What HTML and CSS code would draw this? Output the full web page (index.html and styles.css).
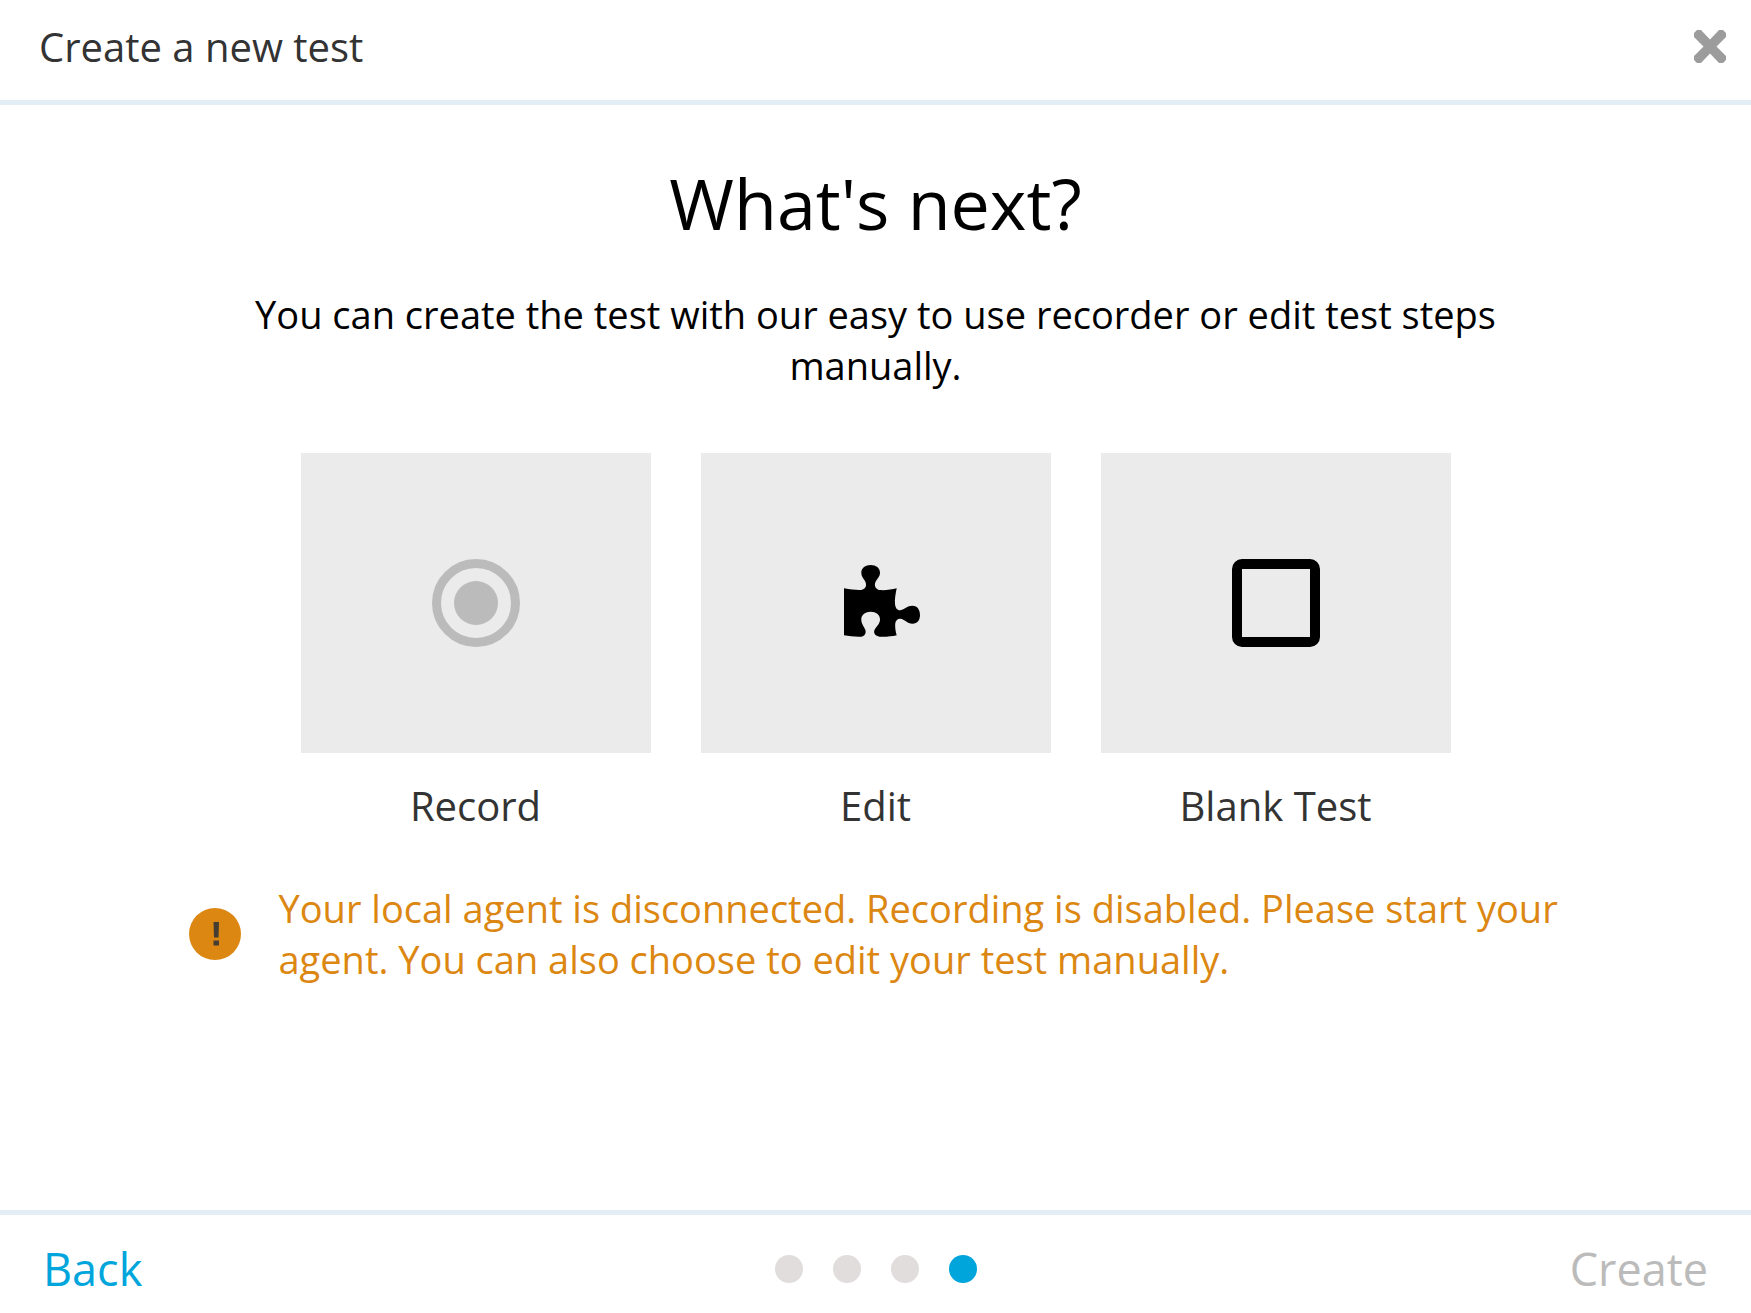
FILE: index.html
```html
<!DOCTYPE html>
<html lang="en">
<head>
<meta charset="utf-8">
<title>Create a new test</title>
<link rel="stylesheet" href="styles.css">
</head>
<body>
<header class="header">
  <h1 class="header-title">Create a new test</h1>
  <button class="close" type="button" aria-label="Close">
    <svg viewBox="0 0 32 33" width="32" height="33"><path d="M3 0H7L16 9.5L25 0H29L32 3V7L22.5 16.5L32 26V30L29 33H25L16 23.5L7 33H3L0 30V26L9.5 16.5L0 7V3Z" fill="#9c9c9c"/></svg>
  </button>
</header>
<main class="content">
  <h2 class="heading">What's next?</h2>
  <p class="intro">You can create the test with our easy to use recorder or edit test steps manually.</p>
  <div class="options">
    <button class="option" type="button" disabled>
      <span class="tile"><svg viewBox="0 0 88 88" width="88" height="88"><circle cx="44" cy="44" r="39.5" fill="none" stroke="#bbb" stroke-width="9"/><circle cx="44" cy="44" r="22" fill="#bbb"/></svg></span>
      <span class="label">Record</span>
    </button>
    <button class="option" type="button">
      <span class="tile"><svg viewBox="0 0 88 88" width="88" height="88"><path d="M12 29.3C18.500 30.500 24.500 31.200 28.500 31C33.500 30.500 35 27 33.500 23C32 19.500 29.300 18 29.300 13.500C29.300 9 33.500 6 38.700 6C44 6 48 9 48 13.500C48 18 45 19.500 43.300 23.500C42 27 44 30.500 47.500 31C53.500 31.500 59.500 30.500 64.700 29.300C63.500 35 62.500 41 63 45C63.500 49.500 65.500 51.500 68.500 51.200C72.500 50.500 75 46.700 80.500 46.700C85.500 46.700 88 51 88 56C88 61 85.500 64.700 80.500 64.700C75 64.700 72.500 60 68.500 59.700C65.500 59.500 63.500 61.500 63.200 65C63 69 63.700 73 64.700 76.300C59.500 77.500 53.500 78 47.500 77.700C43.500 77 41.500 74.500 42.300 71.500C43.500 68 48 65.500 48 60.500C48 55.500 44 52.700 38.700 52.700C33.500 52.700 29.300 55.500 29.300 60.500C29.300 65 32 67.500 33.200 70.500C34.500 74 33 76.800 29.500 77.700C23.500 78 17.500 77.300 12 76.300Z"/></svg></span>
      <span class="label">Edit</span>
    </button>
    <button class="option" type="button">
      <span class="tile"><svg viewBox="0 0 88 88" width="88" height="88"><path fill-rule="evenodd" d="M10 0H78A10 10 0 0 1 88 10V78A10 10 0 0 1 78 88H10A10 10 0 0 1 0 78V10A10 10 0 0 1 10 0ZM10 10V78H78V10Z"/></svg></span>
      <span class="label">Blank Test</span>
    </button>
  </div>
  <div class="warning" role="alert">
    <svg class="warning-icon" viewBox="0 0 52 52" width="52" height="52"><circle cx="26" cy="26" r="26" fill="#db8712"/><path d="M24.500 14h5.500l-.5 15.500h-4.500zM24.500 32.500h5.500v5h-5.500z" fill="#453c32"/></svg>
    <p class="warning-text">Your local agent is disconnected. Recording is disabled. Please start your agent. You can also choose to edit your test manually.</p>
  </div>
</main>
<footer class="footer">
  <button class="action back" type="button">Back</button>
  <div class="steps"><span class="dot"></span><span class="dot"></span><span class="dot"></span><span class="dot active"></span></div>
  <button class="action create" type="button" disabled>Create</button>
</footer>
</body>
</html>
```
FILE: styles.css
```css
* { box-sizing: border-box; }
body {
  margin: 0;
  min-height: 100vh;
  display: flex;
  flex-direction: column;
  background: #fff;
  color: #000;
  font-family: "Open Sans", sans-serif;
}
h1, h2, p { margin: 0; font-weight: 400; }
button { border: 0; padding: 0; background: none; font: inherit; color: inherit; }
svg { display: block; }
.header {
  display: flex;
  align-items: center;
  justify-content: space-between;
  height: 105px;
  padding: 0 25px 7px 39px;
  border-bottom: 5px solid #e3edf6;
}
.header-title { font-size: 40px; line-height: 56px; color: #333; }
.content {
  flex: 1;
  display: flex;
  flex-direction: column;
  align-items: center;
  padding: 46px 180px 0;
}
.heading { font-size: 70px; line-height: 104px; }
.intro { max-width: 1280px; margin-top: 34px; font-size: 38px; line-height: 51px; text-align: center; }
.options { display: flex; gap: 50px; margin-top: 62px; }
.option { width: 350px; }
.tile { display: flex; align-items: center; justify-content: center; height: 300px; background: #ebebeb; }
.label { display: block; margin-top: 26px; font-size: 40px; line-height: 54px; color: #333; }
.warning { display: flex; align-items: center; gap: 38px; width: 100%; max-width: 1374px; margin-top: 50px; color: #db8712; }
.warning-icon { flex: none; }
.warning-text { font-size: 38px; line-height: 51px; }
.footer {
  display: grid;
  grid-template-columns: 1fr auto 1fr;
  align-items: center;
  height: 103px;
  padding: 10px 43px 0;
  border-top: 5px solid #e3edf6;
}
.action { font-size: 45px; line-height: 60px; }
.back { justify-self: start; color: #00a5dc; }
.create { justify-self: end; color: #bbb; }
.steps { display: flex; gap: 30px; }
.dot { width: 28px; height: 28px; border-radius: 50%; background: #e1dddd; }
.active { background: #00a5dc; }
```
